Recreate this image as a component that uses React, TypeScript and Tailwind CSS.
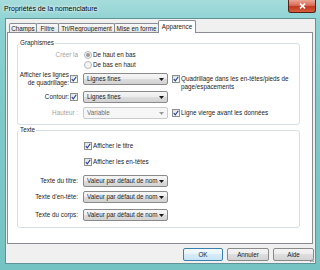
import React from "react";

function Check() {
  return (
    <span className="w-[8px] h-[8px] shrink-0 border border-[#8e8f8f] bg-[linear-gradient(135deg,#d9dde3,#ffffff)] flex items-center justify-center">
      <svg width="6" height="6" viewBox="0 0 6 6">
        <path d="M0.8 3.1 L2.3 4.9 L5.3 0.7" stroke="#2b3f93" strokeWidth="1.1" fill="none" />
      </svg>
    </span>
  );
}

function Radio({ on }: { on?: boolean }) {
  return (
    <span className="w-[8px] h-[8px] shrink-0 rounded-full border border-[#b8b8b8] bg-[#f5f5f5] flex items-center justify-center">
      {on && <span className="w-[4px] h-[4px] rounded-full bg-[#9a9a9a]" />}
    </span>
  );
}

function Combo({ text, disabled }: { text: string; disabled?: boolean }) {
  return (
    <div
      className={
        disabled
          ? "w-[85px] h-[12px] rounded-[2px] border border-[#c9ccce] bg-[#f6f6f6] text-[#6d6d6d] flex items-center pl-[3px] pr-[3px]"
          : "w-[85px] h-[12px] rounded-[2px] border border-[#8a8a8a] bg-[linear-gradient(to_bottom,#f6f6f6_0%,#ececec_50%,#dddddd_50%,#d2d2d2_100%)] flex items-center pl-[3px] pr-[3px]"
      }
    >
      <span className="flex-1 whitespace-nowrap overflow-hidden">{text}</span>
      <svg width="5" height="3" viewBox="0 0 5 3" className="shrink-0">
        <path d="M0 0H5L2.5 3Z" fill={disabled ? "#9a9a9a" : "#1a1a1a"} />
      </svg>
    </div>
  );
}

function Tab({ label, w, first }: { label: string; w: string; first?: boolean }) {
  return (
    <div
      className={
        (first ? "" : "-ml-[1px] ") +
        w +
        " h-[10px] border-t border-l border-r border-[#898c95] bg-[linear-gradient(to_bottom,#f8f8f8,#e4e4e4)] flex items-center justify-center rounded-t-[2px]"
      }
    >
      <span className="leading-[8px] whitespace-nowrap">{label}</span>
    </div>
  );
}

function Button({ label, w, def }: { label: string; w: string; def?: boolean }) {
  return (
    <div
      className={
        w +
        (def
          ? " h-[13px] rounded-[2px] border border-[#3c7fb1] bg-[linear-gradient(to_bottom,#f4fafe_0%,#e6f3fb_50%,#d6ebf8_50%,#c9e4f6_100%)] flex items-center justify-center"
          : " h-[13px] rounded-[2px] border border-[#8a8a8a] bg-[linear-gradient(to_bottom,#f4f4f4_0%,#ececec_50%,#dedede_50%,#d3d3d3_100%)] flex items-center justify-center")
      }
    >
      <span className="leading-[8px]">{label}</span>
    </div>
  );
}

export default function App() {
  return (
    <div
      className="w-[320px] h-[270px] flex flex-col bg-[linear-gradient(to_bottom,#a6dcdc_0%,#8ed2d2_8%,#7fc9c9_40%,#76c3c4_100%)] text-[6.3px] text-[#1c1c1c] overflow-hidden"
      style={{ fontFamily: '"Liberation Sans", Arial, sans-serif' }}
    >
      {/* Title bar */}
      <div className="h-[18px] flex items-start shrink-0">
        <span className="ml-[4px] mt-[5px] text-[7px] leading-[8px] text-black [text-shadow:0_0_3px_#ffffff,0_0_5px_#ffffff]">
          Propriétés de la nomenclature
        </span>
        <div className="ml-auto mr-[4px] w-[28px] h-[13px] rounded-b-[3px] border border-t-0 border-[#5b1f14] bg-[linear-gradient(to_bottom,#e9a796_0%,#d96b55_45%,#c0391f_55%,#d4603f_100%)] flex items-center justify-center">
          <svg width="7" height="6" viewBox="0 0 7 6">
            <path d="M1 0.6 L6 5.4 M6 0.6 L1 5.4" stroke="#ffffff" strokeWidth="1.5" />
          </svg>
        </div>
      </div>

      <div className="flex pl-[5px] pr-[4px] shrink-0">
        {/* Client area */}
        <div className="relative w-[311px] h-[246px] border border-[#5f9396] bg-[#f0f0f0] flex flex-col">
          {/* Tabs */}
          <div className="pt-[1px] pl-[3px] h-[14px] flex items-end">
            <Tab label="Champs" w="w-[28px]" first />
            <Tab label="Filtre" w="w-[23px]" />
            <Tab label="Tri/Regroupement" w="w-[57px]" />
            <Tab label="Mise en forme" w="w-[45px]" />
            <div className="-ml-[1px] relative z-10 w-[38px] h-[13px] border-t border-l border-r border-[#898c95] bg-white flex items-center justify-center rounded-t-[2px]">
              <span className="leading-[8px] -mt-[1px]">Apparence</span>
            </div>
          </div>

          {/* Panel */}
          <div className="-mt-[1px] ml-[1px] w-[306px] h-[212px] border border-[#898c95] bg-white pt-[6px] pl-[9px] pr-[12px]">
            {/* Graphismes */}
            <fieldset className="border border-[#d5dfe5] rounded-[3px] px-0 pb-[5px] m-0">
              <legend className="ml-[1px] px-[1px] leading-[8px]">Graphismes</legend>

              <div className="mt-[3px] h-[10px] flex items-center">
                <div className="w-[60px] text-right text-[#a3a3a3]">Créer la</div>
                <div className="ml-[6px] flex items-center gap-[1px]">
                  <Radio on />
                  <span>De haut en bas</span>
                </div>
              </div>
              <div className="h-[10px] flex items-center">
                <div className="w-[60px]" />
                <div className="ml-[6px] flex items-center gap-[1px]">
                  <Radio />
                  <span>De bas en haut</span>
                </div>
              </div>

              <div className="mt-[3px] h-[12px] flex items-center">
                <div className="w-[60px] flex items-center justify-end gap-[1px]">
                  <span className="text-right leading-[8px] whitespace-nowrap">
                    Afficher les lignes
                    <br />
                    de quadrillage:
                  </span>
                  <Check />
                </div>
                <div className="ml-[5px]">
                  <Combo text="Lignes fines" />
                </div>
                <div className="ml-[4px] self-start mt-[2px] flex items-start gap-[1px]">
                  <Check />
                  <span className="leading-[8px] whitespace-nowrap -mt-[0px]">
                    Quadrillage dans les en-têtes/pieds de
                    <br />
                    page/espacements
                  </span>
                </div>
              </div>

              <div className="mt-[6px] h-[12px] flex items-center">
                <div className="w-[60px] flex items-center justify-end gap-[1px]">
                  <span>Contour:</span>
                  <Check />
                </div>
                <div className="ml-[5px]">
                  <Combo text="Lignes fines" />
                </div>
              </div>

              <div className="mt-[4px] h-[12px] flex items-center">
                <div className="w-[60px] text-right text-[#a3a3a3]">Hauteur :</div>
                <div className="ml-[5px]">
                  <Combo text="Variable" disabled />
                </div>
                <div className="ml-[4px] flex items-center gap-[1px]">
                  <Check />
                  <span className="whitespace-nowrap">Ligne vierge avant les données</span>
                </div>
              </div>
            </fieldset>

            {/* Texte */}
            <fieldset className="mt-[1px] border border-[#d5dfe5] rounded-[3px] px-0 pb-[6px] m-0">
              <legend className="ml-[1px] px-[1px] leading-[8px]">Texte</legend>

              <div className="mt-[7px] h-[10px] flex items-center">
                <div className="w-[60px]" />
                <div className="ml-[6px] flex items-center gap-[1px]">
                  <Check />
                  <span>Afficher le titre</span>
                </div>
              </div>
              <div className="mt-[6px] h-[10px] flex items-center">
                <div className="w-[60px]" />
                <div className="ml-[6px] flex items-center gap-[1px]">
                  <Check />
                  <span>Afficher les en-têtes</span>
                </div>
              </div>

              <div className="mt-[8px] h-[12px] flex items-center">
                <div className="w-[60px] text-right whitespace-nowrap">Texte du titre:</div>
                <div className="ml-[5px]">
                  <Combo text="Valeur par défaut de nom" />
                </div>
              </div>
              <div className="mt-[4px] h-[12px] flex items-center">
                <div className="w-[60px] text-right whitespace-nowrap">Texte d'en-tête:</div>
                <div className="ml-[5px]">
                  <Combo text="Valeur par défaut de nom" />
                </div>
              </div>
              <div className="mt-[6px] h-[12px] flex items-center">
                <div className="w-[60px] text-right whitespace-nowrap">Texte du corps:</div>
                <div className="ml-[5px]">
                  <Combo text="Valeur par défaut de nom" />
                </div>
              </div>
            </fieldset>
          </div>

          {/* Buttons */}
          <div className="mt-[4px] flex justify-end gap-[4px] pr-[1px]">
            <Button label="OK" w="w-[40px]" def />
            <Button label="Annuler" w="w-[42px]" />
            <Button label="Aide" w="w-[41px]" />
          </div>

          {/* size grip */}
          <svg className="absolute right-[0px] bottom-[0px]" width="5" height="5" viewBox="0 0 5 5">
            <rect x="3" y="0" width="1" height="1" fill="#9a9a9a" />
            <rect x="1.5" y="1.5" width="1" height="1" fill="#9a9a9a" />
            <rect x="3" y="1.5" width="1" height="1" fill="#9a9a9a" />
            <rect x="0" y="3" width="1" height="1" fill="#9a9a9a" />
            <rect x="1.5" y="3" width="1" height="1" fill="#9a9a9a" />
            <rect x="3" y="3" width="1" height="1" fill="#9a9a9a" />
          </svg>
        </div>
      </div>
    </div>
  );
}
